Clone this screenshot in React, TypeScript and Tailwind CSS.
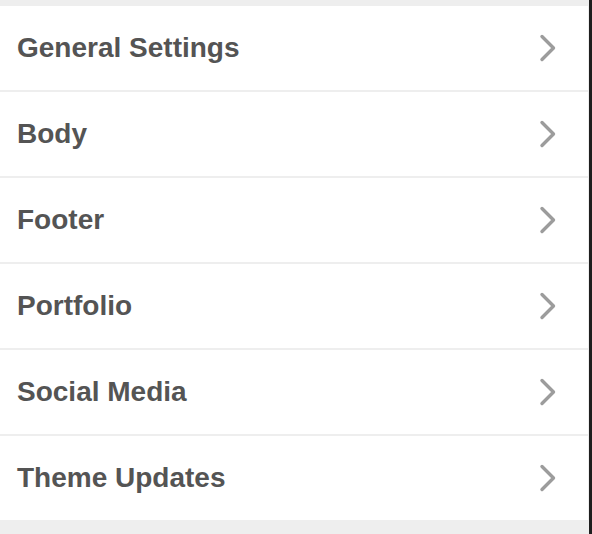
const ITEMS = [
  "General Settings",
  "Body",
  "Footer",
  "Portfolio",
  "Social Media",
  "Theme Updates",
];

function Chevron() {
  return (
    <svg width="18" height="28" viewBox="0 0 18 28" fill="none" className="shrink-0">
      <polyline
        points="3,2.5 14.5,14 3,25.5"
        stroke="#9c9c9c"
        strokeWidth="3.4"
        strokeLinecap="round"
        strokeLinejoin="round"
      />
    </svg>
  );
}

export default function App() {
  return (
    <div className="flex h-[534px] w-[592px] bg-[#eeeeee]">
      <div className="flex w-[589px] flex-col pt-[6px]">
        <ul className="flex w-[588px] flex-col gap-[2px]">
          {ITEMS.map((label) => (
            <li
              key={label}
              className="flex h-[84px] items-center justify-between bg-white pl-[17px] pr-[31px]"
            >
              <span
                className="text-[28px] font-bold leading-none text-[#545454]"
                style={{ fontFamily: '"Liberation Sans", Arial, sans-serif' }}
              >
                {label}
              </span>
              <Chevron />
            </li>
          ))}
        </ul>
      </div>
      <div className="w-[3px] bg-[#1e1e1e]" />
    </div>
  );
}
